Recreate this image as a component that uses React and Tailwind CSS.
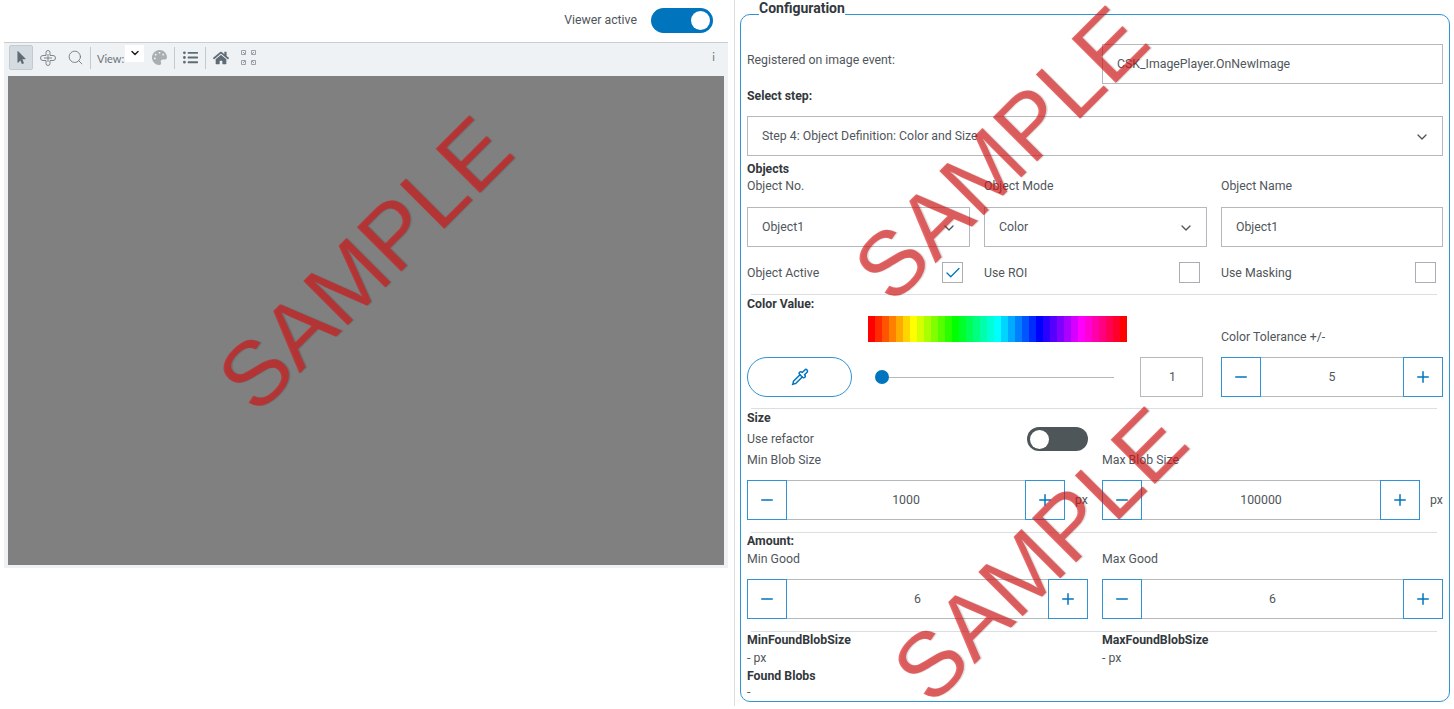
import { ChevronDown, Check, Minus, Plus, Pipette, Search } from 'lucide-react'
import { FaPalette, FaHome, FaListUl, FaMousePointer } from 'react-icons/fa'

const hues = Array.from({ length: 37 }, (_, i) => i * 10)

function Label({ children, className = '' }) {
  return <div className={`text-[12.3px] leading-[16px] text-[#50565b] ${className}`}>{children}</div>
}

function Title({ children, className = '' }) {
  return <div className={`text-[12.3px] leading-[16px] font-bold text-[#33383c] ${className}`}>{children}</div>
}

function Field({ children, className = '' }) {
  return (
    <div className={`h-10 flex items-center justify-between border border-[#b4b9bd] pl-[14px] pr-[12px] pt-[1px] text-[12.3px] text-[#50565b] ${className}`}>
      {children}
    </div>
  )
}

function Stepper({ value, className = '' }) {
  return (
    <div className={`h-10 flex text-[12.3px] text-[#50565b] ${className}`}>
      <button className="w-10 shrink-0 flex items-center justify-center border border-[#2f93d5] text-[#0075be]">
        <Minus size={18} strokeWidth={2} />
      </button>
      <div className="flex-1 flex items-center justify-center border-y border-[#b4b9bd] pt-[1px]">{value}</div>
      <button className="w-10 shrink-0 flex items-center justify-center border border-[#2f93d5] text-[#0075be]">
        <Plus size={18} strokeWidth={2} />
      </button>
    </div>
  )
}

function CheckRow({ label, checked }) {
  return (
    <div className="flex items-center justify-between pr-[7px]">
      <Label>{label}</Label>
      <div className="w-[21px] h-[21px] flex items-center justify-center border border-[#a9aeb2] text-[#0075be]">
        {checked && <Check size={18} strokeWidth={1.75} />}
      </div>
    </div>
  )
}

function Divider({ className = '' }) {
  return <div className={`h-px bg-[#dcdfe1] ml-[4px] mr-[6px] ${className}`} />
}

function Sep() {
  return <div className="w-px h-[22px] bg-[#c5cacd]" />
}

function Toolbar() {
  return (
    <div className="h-[30px] ml-[4px] mr-[6px] flex items-center bg-[#eef2f5] border-t border-[#c9cdd0] text-[#8b9296] font-['Lato',sans-serif]">
      <div className="ml-[5px] w-[24px] h-[25px] flex items-center justify-center bg-[#d5dce1] border border-[#c4cbd0] rounded-[2px] text-[#5f6c75]">
        <FaMousePointer size={13} />
      </div>
      <div className="w-[30px] flex justify-center">
        <svg width="16" height="16" viewBox="0 0 16 16" fill="none" stroke="#7d8589" strokeWidth="1">
          <path d="M6 5.500V2.500a2 2 0 0 1 4 0v3h3a2.500 2.500 0 0 1 0 5h-3v3a2 2 0 0 1-4 0v-3H3a2.500 2.500 0 0 1 0-5z" />
          <path d="M8 4v8M4 8h8" />
        </svg>
      </div>
      <div className="w-[24px] flex justify-center text-[#6f777b]">
        <Search size={17} strokeWidth={1.25} />
      </div>
      <div className="ml-[3px]"><Sep /></div>
      <span className="ml-[6px] w-[28px] pt-[3px] text-[11px] text-[#6c7377]">View:</span>
      <div className="w-[19px] h-[17px] -mt-[9px] flex items-center justify-center bg-white text-[#222]">
        <ChevronDown size={12} strokeWidth={3} />
      </div>
      <div className="w-[30px] flex justify-center text-[#a9aeb1]">
        <FaPalette size={15} />
      </div>
      <Sep />
      <div className="w-[30px] flex justify-center text-[#5f6c75]">
        <FaListUl size={15} />
      </div>
      <Sep />
      <div className="w-[30px] flex justify-center text-[#5f6c75]">
        <FaHome size={16} />
      </div>
      <div className="w-[25px] flex justify-center">
        <svg width="15" height="15" viewBox="0 0 15 15" fill="none" stroke="#9aa1a5" strokeWidth="1">
          <path d="M.5 .5h4v4h-4zM10.500 .5h4v4h-4zM.5 10.500h4v4h-4zM10.500 10.500h4v4h-4z" />
          <path d="M2 2l2 2M13 2l-2 2M2 13l2-2M13 13l-2-2" />
        </svg>
      </div>
      <span className="ml-auto mr-[13px] text-[11px] text-[#6c7377]">i</span>
    </div>
  )
}

function Watermark({ className = '' }) {
  return (
    <div className={`absolute pointer-events-none -rotate-45 font-['Liberation_Sans',sans-serif] text-[91px] leading-none text-[#db1313]/[0.63] [text-shadow:1px_1px_1px_rgba(0,0,0,0.15)] ${className}`}>
      SAMPLE
    </div>
  )
}

export default function App() {
  return (
    <div className="relative w-[1454px] h-[709px] overflow-hidden bg-white flex font-['Roboto',sans-serif]">
      {/* Viewer */}
      <div className="w-[735px] h-[706px] shrink-0 border-r border-[#dcdfe1]">
        <div className="h-[42px] flex items-center justify-end pr-[21px] pb-[1px] gap-[14px]">
          <span className="text-[12.3px] text-[#50565b]">Viewer active</span>
          <div className="w-[62px] h-[25px] rounded-full bg-[#0075be] flex items-center justify-end pr-[3px]">
            <div className="w-[19px] h-[19px] rounded-full bg-white" />
          </div>
        </div>
        <Toolbar />
        <div className="ml-[4px] mr-[6px] h-[496px] bg-[#eef2f5] px-[4px] pt-[4px]">
          <div className="h-[489px] bg-[#808080]" />
        </div>
      </div>

      {/* Configuration */}
      <fieldset className="ml-[5px] w-[710px] h-[702px] border border-[#2f93d5] rounded-[10px] pl-[6px] pr-[6px]">
        <legend className="ml-[12px] h-[28px] text-[14px] leading-[16px] font-bold text-[#33383c] bg-white">
          Configuration
        </legend>

        <div className="grid grid-cols-2 gap-x-[14px] pt-[16px]">
          <Label className="self-center pb-[9px]">Registered on image event:</Label>
          <Field>CSK_ImagePlayer.OnNewImage</Field>
        </div>

        <Title className="mt-[4px]">Select step:</Title>
        <Field className="mt-[12px]">
          Step 4: Object Definition: Color and Size
          <ChevronDown size={16} className="text-[#50565b]" />
        </Field>

        <Title className="mt-[5px]">Objects</Title>
        <div className="grid grid-cols-[223px_223px_1fr] gap-x-[14px]">
          <div>
            <Label className="mt-[1px] mb-[13px]">Object No.</Label>
            <Field>Object1<ChevronDown size={16} /></Field>
          </div>
          <div>
            <Label className="mt-[1px] mb-[13px]">Object Mode</Label>
            <Field>Color<ChevronDown size={16} /></Field>
          </div>
          <div>
            <Label className="mt-[1px] mb-[13px]">Object Name</Label>
            <Field>Object1</Field>
          </div>
        </div>

        <div className="grid grid-cols-[223px_223px_1fr] gap-x-[14px] mt-[15px]">
          <CheckRow label="Object Active" checked />
          <CheckRow label="Use ROI" />
          <CheckRow label="Use Masking" />
        </div>
        <Divider className="mt-[11px]" />

        <Title className="mt-[1px]">Color Value:</Title>
        <div className="flex items-end h-[24px] mt-[6px]">
          <div className="ml-[121px] w-[259px] h-[26px] flex shrink-0 overflow-hidden">
            {hues.map((h) => (
              <div key={h} className="flex-1" style={{ background: `hsl(${h}, 100%, 50%)` }} />
            ))}
          </div>
          <Label className="ml-[94px] mb-[-3px]">Color Tolerance +/-</Label>
        </div>
        <div className="flex items-center mt-[15px]">
          <button className="w-[105px] h-10 shrink-0 rounded-full border border-[#2f93d5] flex items-center justify-center text-[#0075be]">
            <Pipette size={18} strokeWidth={2} />
          </button>
          <div className="ml-[23px] w-[239px] shrink-0 flex items-center">
            <div className="w-[14px] h-[14px] shrink-0 rounded-full bg-[#0075be]" />
            <div className="flex-1 h-px bg-[#b4b9bd]" />
          </div>
          <Field className="ml-[26px] w-[63px] !justify-center shrink-0">1</Field>
          <Stepper value="5" className="ml-[18px] flex-1" />
        </div>
        <Divider className="mt-[11px]" />

        <Title className="mt-[1px]">Size</Title>
        <div className="flex items-center h-[16px] mt-[5px]">
          <Label className="w-[280px]">Use refactor</Label>
          <div className="w-[61px] h-[24px] shrink-0 rounded-full bg-[#4f565a] flex items-center pl-[3px]">
            <div className="w-[19px] h-[19px] rounded-full bg-white" />
          </div>
        </div>
        <div className="grid grid-cols-2 gap-x-[14px]">
          <div>
            <Label className="mt-[5px] mb-[12px]">Min Blob Size</Label>
            <div className="flex items-center">
              <Stepper value="1000" className="w-[318px]" />
              <span className="ml-[10px] text-[12.3px] text-[#50565b]">px</span>
            </div>
          </div>
          <div>
            <Label className="mt-[5px] mb-[12px]">Max Blob Size</Label>
            <div className="flex items-center">
              <Stepper value="100000" className="w-[318px]" />
              <span className="ml-[10px] text-[12.3px] text-[#50565b]">px</span>
            </div>
          </div>
        </div>
        <Divider className="mt-[12px]" />

        <Title>Amount:</Title>
        <div className="grid grid-cols-2 gap-x-[14px]">
          <div>
            <Label className="mt-[2px] mb-[12px]">Min Good</Label>
            <Stepper value="6" />
          </div>
          <div>
            <Label className="mt-[2px] mb-[12px]">Max Good</Label>
            <Stepper value="6" />
          </div>
        </div>
        <Divider className="mt-[12px]" />

        <div className="grid grid-cols-2 gap-x-[14px]">
          <div>
            <Title>MinFoundBlobSize</Title>
            <Label className="mt-[2px]">- px</Label>
          </div>
          <div>
            <Title>MaxFoundBlobSize</Title>
            <Label className="mt-[2px]">- px</Label>
          </div>
        </div>
        <Title className="mt-[2px]">Found Blobs</Title>
        <Label>-</Label>
      </fieldset>

      <Watermark className="left-[180px] top-[218px]" />
      <Watermark className="left-[816px] top-[108px]" />
      <Watermark className="left-[855px] top-[509px]" />
    </div>
  )
}
